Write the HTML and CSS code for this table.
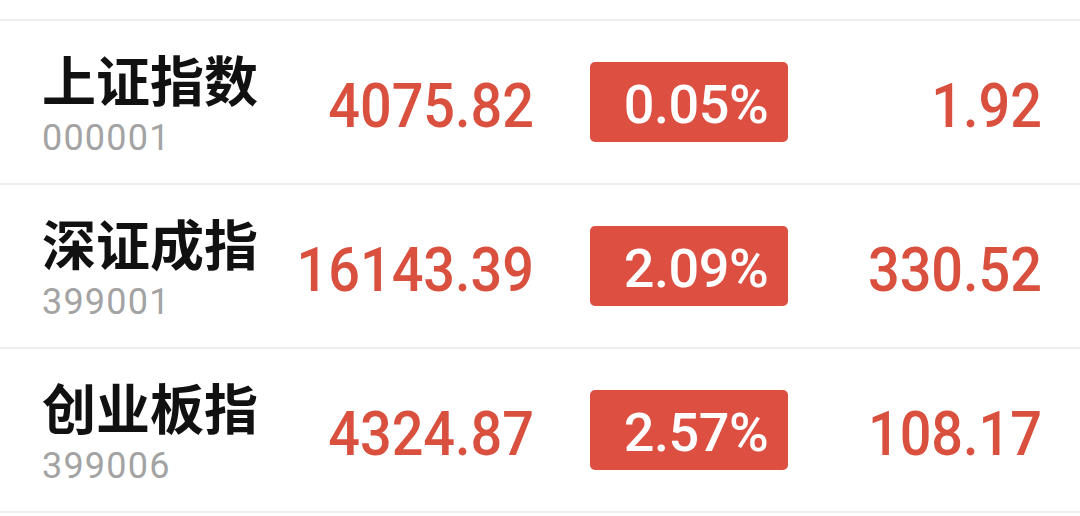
FILE: index.html
```html
<!DOCTYPE html>
<html lang="zh-CN">
<head>
    <meta charset="UTF-8">
    <meta name="viewport" content="width=device-width, initial-scale=1.0">
    <title>指数行情</title>
    <link rel="stylesheet" href="styles.css">
</head>
<body>

    <div class="index-list">
        <div class="index-row">
            <div class="index-name">
                <div class="name">上证指数</div>
                <div class="code">000001</div>
            </div>
            <div class="price">4075.82</div>
            <div class="percent"><span>0.05%</span></div>
            <div class="change">1.92</div>
        </div>

        <div class="index-row">
            <div class="index-name">
                <div class="name">深证成指</div>
                <div class="code">399001</div>
            </div>
            <div class="price">16143.39</div>
            <div class="percent"><span>2.09%</span></div>
            <div class="change">330.52</div>
        </div>

        <div class="index-row">
            <div class="index-name">
                <div class="name">创业板指</div>
                <div class="code">399006</div>
            </div>
            <div class="price">4324.87</div>
            <div class="percent"><span>2.57%</span></div>
            <div class="change">108.17</div>
        </div>
    </div>

</body>
</html>
```

FILE: styles.css
```css
body {
    margin: 0;
    padding-top: 19px;
    background-color: #fff;
    font-family: Roboto, "Noto Sans CJK SC", sans-serif;
}

.index-list {
    border-bottom: 2px solid #eeeeee;
}

.index-row {
    display: grid;
    grid-template-columns: 202px 290px 254px 1fr;
    align-items: center;
    height: 162px;
    padding: 0 38px 0 42px;
    border-top: 2px solid #eeeeee;
}

.index-name {
    padding-top: 3px;
}

.name {
    font-family: "Noto Sans CJK SC", sans-serif;
    font-size: 54px;
    font-weight: 700;
    line-height: 1;
    color: #111;
    white-space: nowrap;
}

.code {
    margin-top: 14px;
    font-size: 36px;
    line-height: 1;
    letter-spacing: 1.2px;
    color: #a3a3a3;
}

/* narrow the digits a little, the app uses a DIN style face */
.price,
.change {
    padding-top: 8px;
    font-size: 62px;
    font-weight: 500;
    line-height: 1;
    color: #d9503f;
    text-align: right;
    white-space: nowrap;
    transform: scaleX(0.9);
    transform-origin: right center;
}

.percent {
    justify-self: end;
    display: flex;
    align-items: center;
    justify-content: center;
    width: 198px;
    height: 80px;
    box-sizing: border-box;
    padding: 6px 0 0 14px;
    background-color: #dc4f41;
    border-radius: 5px;
}

.percent span {
    font-size: 54px;
    font-weight: 500;
    line-height: 1;
    letter-spacing: -0.5px;
    color: #fff;
}
```
